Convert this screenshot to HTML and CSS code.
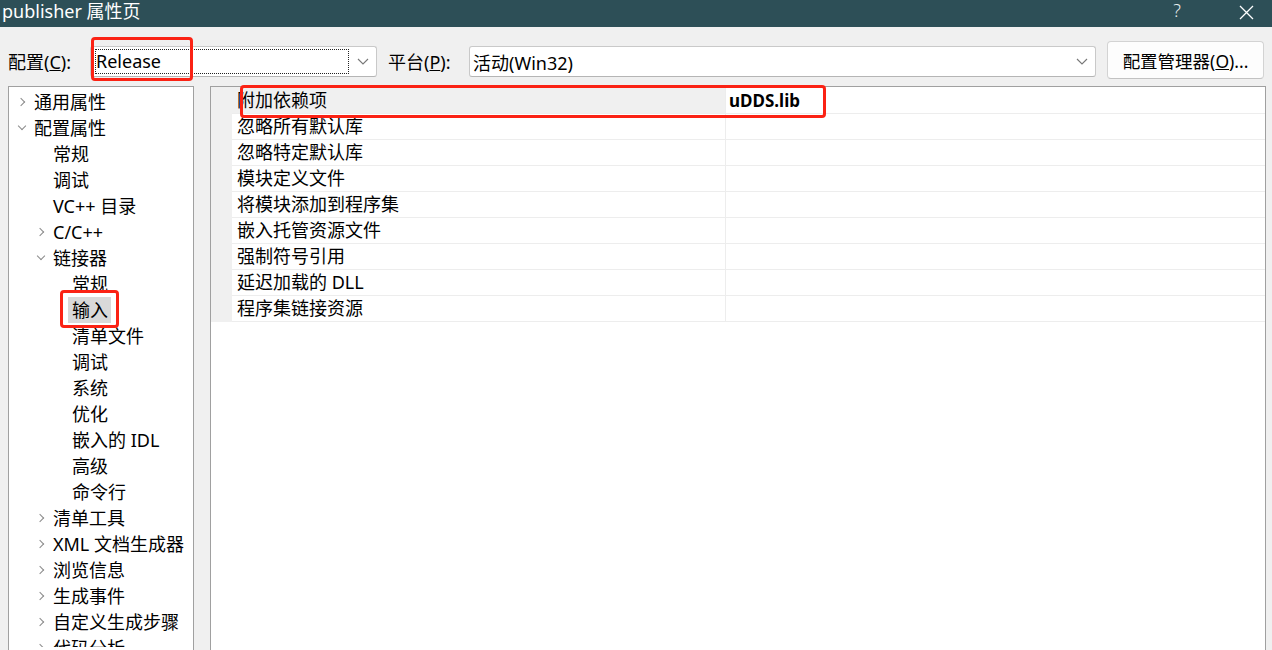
FILE: index.html
```html
<!DOCTYPE html>
<html lang="zh-CN">
<head>
  <meta charset="UTF-8">
  <title>publisher 属性页</title>
  <link rel="stylesheet" href="styles.css">
</head>
<body>
  <!-- title bar -->
  <div class="titlebar">
    <span class="title">publisher 属性页</span>
    <span class="help">?</span>
    <span class="close">
      <svg width="15" height="15" viewBox="0 0 15 15"><path d="M1 1 L14 14 M14 1 L1 14" stroke="#fff" stroke-width="1.3" fill="none"/></svg>
    </span>
  </div>

  <!-- config / platform row -->
  <div class="toolbar">
    <span class="label">配置(<u>C</u>):</span>
    <div class="combo combo-config">
      <span class="focus">Release</span>
      <svg class="chev" width="12" height="7" viewBox="0 0 12 7"><path d="M1 1 L6 6 L11 1" stroke="#777" stroke-width="1.1" fill="none"/></svg>
    </div>
    <span class="label label-platform">平台(<u>P</u>):</span>
    <div class="combo combo-platform">
      <span class="value">活动(Win32)</span>
      <svg class="chev" width="12" height="7" viewBox="0 0 12 7"><path d="M1 1 L6 6 L11 1" stroke="#777" stroke-width="1.1" fill="none"/></svg>
    </div>
    <button class="manager">配置管理器(<u>O</u>)...</button>
  </div>

  <div class="main">
    <!-- property tree -->
    <div class="tree">
      <div class="node l1"><span class="arrow closed"></span>通用属性</div>
      <div class="node l1"><span class="arrow open"></span>配置属性</div>
      <div class="node l2"><span class="arrow"></span>常规</div>
      <div class="node l2"><span class="arrow"></span>调试</div>
      <div class="node l2"><span class="arrow"></span>VC++ 目录</div>
      <div class="node l2"><span class="arrow closed"></span>C/C++</div>
      <div class="node l2"><span class="arrow open"></span>链接器</div>
      <div class="node l3"><span class="arrow"></span>常规</div>
      <div class="node l3"><span class="arrow"></span><span class="selected">输入</span></div>
      <div class="node l3"><span class="arrow"></span>清单文件</div>
      <div class="node l3"><span class="arrow"></span>调试</div>
      <div class="node l3"><span class="arrow"></span>系统</div>
      <div class="node l3"><span class="arrow"></span>优化</div>
      <div class="node l3"><span class="arrow"></span>嵌入的 IDL</div>
      <div class="node l3"><span class="arrow"></span>高级</div>
      <div class="node l3"><span class="arrow"></span>命令行</div>
      <div class="node l2"><span class="arrow closed"></span>清单工具</div>
      <div class="node l2"><span class="arrow closed"></span>XML 文档生成器</div>
      <div class="node l2"><span class="arrow closed"></span>浏览信息</div>
      <div class="node l2"><span class="arrow closed"></span>生成事件</div>
      <div class="node l2"><span class="arrow closed"></span>自定义生成步骤</div>
      <div class="node l2 last"><span class="arrow closed"></span>代码分析</div>
    </div>

    <!-- property grid -->
    <div class="grid">
      <div class="row active"><span class="gutter"></span><span class="name">附加依赖项</span><span class="val">uDDS.lib</span></div>
      <div class="row"><span class="gutter"></span><span class="name">忽略所有默认库</span><span class="val"></span></div>
      <div class="row"><span class="gutter"></span><span class="name">忽略特定默认库</span><span class="val"></span></div>
      <div class="row"><span class="gutter"></span><span class="name">模块定义文件</span><span class="val"></span></div>
      <div class="row"><span class="gutter"></span><span class="name">将模块添加到程序集</span><span class="val"></span></div>
      <div class="row"><span class="gutter"></span><span class="name">嵌入托管资源文件</span><span class="val"></span></div>
      <div class="row"><span class="gutter"></span><span class="name">强制符号引用</span><span class="val"></span></div>
      <div class="row"><span class="gutter"></span><span class="name">延迟加载的 DLL</span><span class="val"></span></div>
      <div class="row"><span class="gutter"></span><span class="name">程序集链接资源</span><span class="val"></span></div>
    </div>
  </div>

  <!-- red annotation boxes -->
  <div class="mark mark-config"></div>
  <div class="mark mark-input"></div>
  <div class="mark mark-dep"></div>
</body>
</html>
```

FILE: styles.css
```css
body {
  margin: 0;
  width: 1272px;
  height: 650px;
  overflow: hidden;
  position: relative;
  background: #f0f0f0;
  font-family: "Noto Sans", "Noto Sans CJK SC", sans-serif;
  font-size: 18px;
  color: #000;
}
.titlebar {
  height: 27px;
  background: #2d4f57;
  color: #fff;
  display: flex;
  align-items: flex-start;
}
.title {
  margin-left: 2px;
  font-size: 18px;
  line-height: 22px;
}
.help {
  margin-left: auto;
  padding-top: 1px;
  font-size: 18px;
  line-height: 19px;
  font-weight: 300;
  color: #e8eeee;
}
.close {
  margin-left: 58px;
  margin-right: 18px;
  padding-top: 1px;
}
.toolbar {
  display: flex;
  align-items: center;
  height: 38px;
  margin-top: 14px;
}
.label {
  margin-left: 8px;
  width: 82px;
  margin-top: 1px;
}
.label-platform {
  margin-left: 11px;
  width: 81px;
}
.combo {
  box-sizing: border-box;
  height: 31px;
  margin-top: 3px;
  background: #fff;
  border: 1px solid #c9c9c9;
  border-bottom-color: #b5b5b5;
  border-radius: 3px;
  display: flex;
  align-items: center;
  position: relative;
}
.combo-config {
  width: 287px;
}
.combo-platform {
  width: 627px;
}
.combo .focus {
  box-sizing: border-box;
  margin-left: 4px;
  width: 254px;
  height: 25px;
  line-height: 23px;
  border: 1px dotted #222;
}
.combo .value {
  margin-left: 3px;
}
.chev {
  margin-left: auto;
  margin-right: 7px;
}
.manager {
  box-sizing: border-box;
  margin-left: 11px;
  width: 157px;
  height: 38px;
  background: #fdfdfd;
  border: 1px solid #d3d3d3;
  border-bottom-color: #c2c2c2;
  border-radius: 4px;
  font-family: inherit;
  font-size: 17.5px;
  color: #000;
  padding: 0;
  white-space: nowrap;
}
.main {
  display: flex;
  margin-top: 7px;
}
.tree {
  box-sizing: border-box;
  margin-left: 8px;
  width: 186px;
  height: 580px;
  background: #fff;
  border: 1px solid #a0a0a0;
  padding-top: 2px;
}
.node {
  height: 26px;
  line-height: 26px;
  display: flex;
  align-items: center;
  white-space: nowrap;
}
.node.last {
  height: 12px;
  align-items: flex-start;
  overflow: hidden;
}
.l1 { padding-left: 6px; }
.l2 { padding-left: 25px; }
.l3 { padding-left: 44px; }
.arrow {
  width: 19px;
  height: 26px;
  flex: none;
  position: relative;
}
.arrow.closed::before,
.arrow.open::before {
  content: "";
  position: absolute;
  width: 5px;
  height: 5px;
  border-right: 1.3px solid #8a8a8a;
  border-bottom: 1.3px solid #8a8a8a;
}
.arrow.closed::before {
  left: 3px;
  top: 10px;
  transform: rotate(-45deg);
}
.arrow.open::before {
  left: 4px;
  top: 8px;
  transform: rotate(45deg);
}
.selected {
  background: #d9d9d9;
  margin-left: -4px;
  padding: 0 3px 0 4px;
}
.grid {
  box-sizing: border-box;
  margin-left: 16px;
  width: 1056px;
  height: 580px;
  background: #fff;
  border: 1px solid #a0a0a0;
  padding-top: 1px;
}
.row {
  display: flex;
  height: 26px;
  line-height: 25px;
}
.row:first-child {
  height: 27px;
  margin-top: -1px;
  line-height: 27px;
}
.gutter {
  width: 21px;
  background: #f0f0f0;
  flex: none;
}
.name {
  box-sizing: border-box;
  width: 494px;
  padding-left: 5px;
  border-bottom: 1px solid #ededed;
  border-right: 1px solid #ededed;
  flex: none;
}
.val {
  flex: 1;
  padding-left: 3px;
  border-bottom: 1px solid #ededed;
  font-weight: bold;
  font-size: 17px;
}
.row.active .name {
  background: #f0f0f0;
}
.mark {
  position: absolute;
  box-sizing: border-box;
  border: 3px solid #fb2214;
  border-radius: 4px;
}
.mark-config {
  left: 91px;
  top: 37px;
  width: 102px;
  height: 44px;
}
.mark-input {
  left: 60px;
  top: 290px;
  width: 59px;
  height: 38px;
}
.mark-dep {
  left: 240px;
  top: 85px;
  width: 586px;
  height: 33px;
}
```
